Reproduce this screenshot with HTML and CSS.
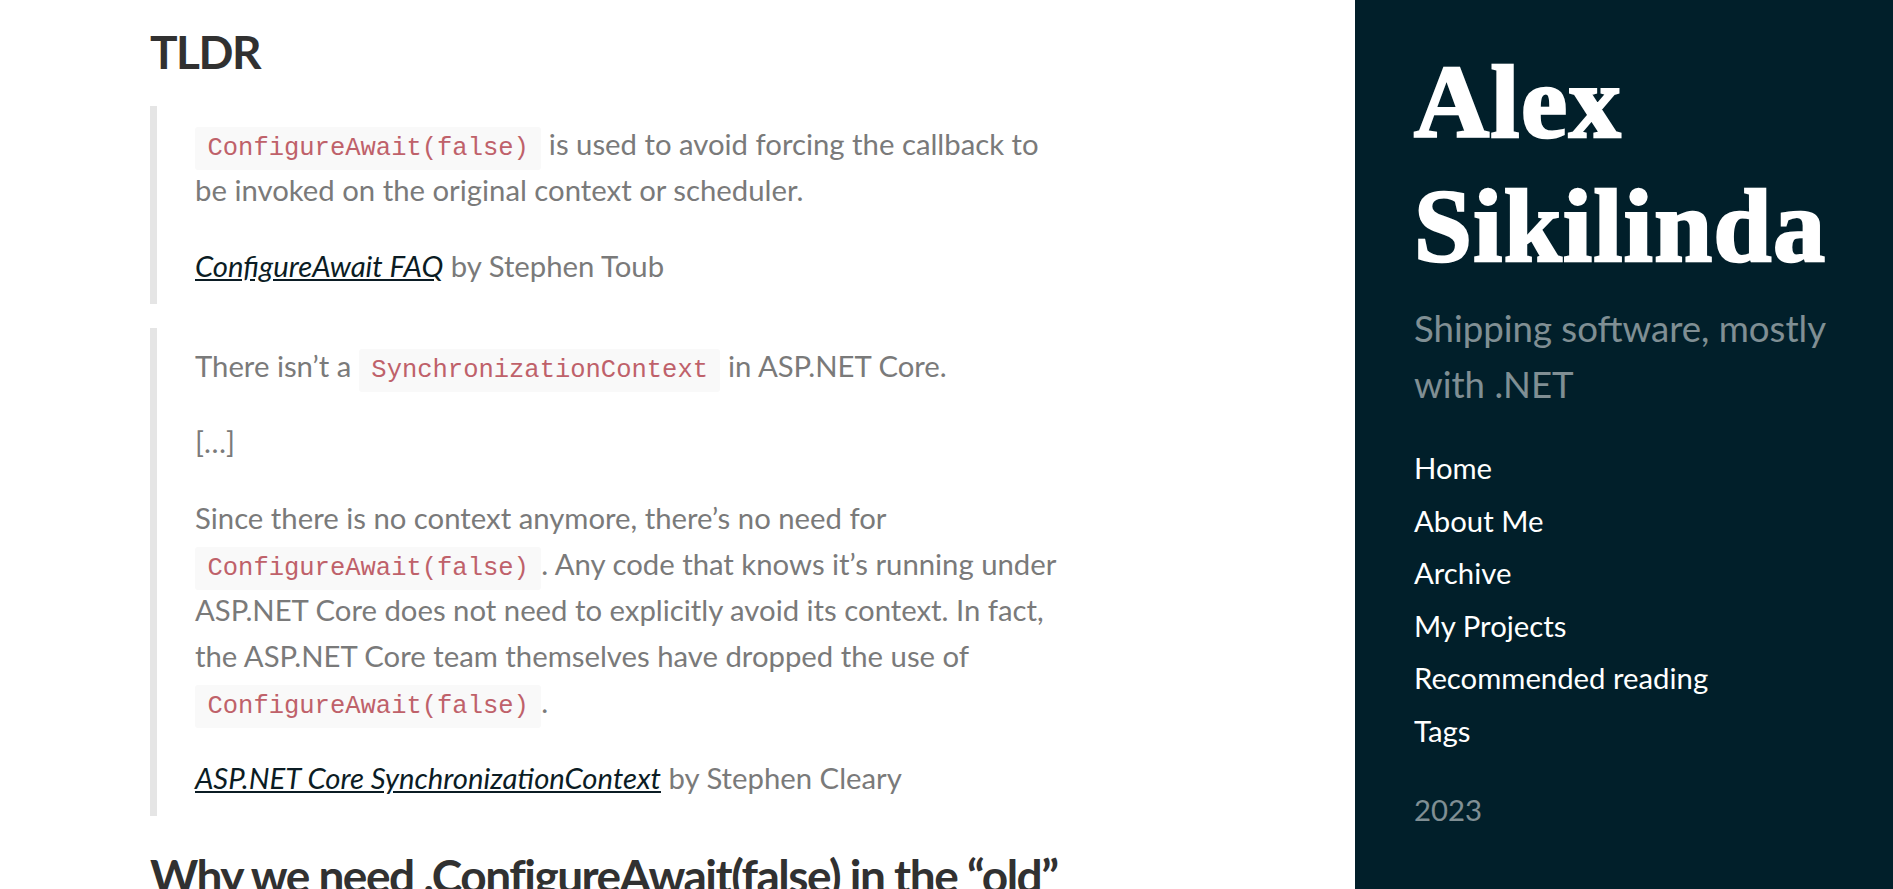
FILE: index.html
```html
<!DOCTYPE html>
<html lang="en">
<head>
<meta charset="utf-8">
<title>ConfigureAwait(false) – Alex Sikilinda</title>
<link rel="stylesheet" href="styles.css">
</head>
<body>
<div class="layout">
  <main class="content">
    <article class="post">
      <h2 class="post-heading">TLDR</h2>
      <blockquote class="quote">
        <p><code class="code">ConfigureAwait(false)</code> is used to avoid forcing the callback to be invoked on the original context or scheduler.</p>
        <p><a class="quote-link" href="#"><em>ConfigureAwait FAQ</em></a> by Stephen Toub</p>
      </blockquote>
      <blockquote class="quote">
        <p>There isn’t a <code class="code">SynchronizationContext</code> in ASP.NET Core.</p>
        <p>[…]</p>
        <p>Since there is no context anymore, there’s no need for <code class="code">ConfigureAwait(false)</code>. Any code that knows it’s running under ASP.NET Core does not need to explicitly avoid its context. In fact, the ASP.NET Core team themselves have dropped the use of <code class="code">ConfigureAwait(false)</code>.</p>
        <p><a class="quote-link" href="#"><em>ASP.NET Core SynchronizationContext</em></a> by Stephen Cleary</p>
      </blockquote>
      <h2 class="post-heading post-heading-next">Why we need .ConfigureAwait(false) in the “old” ASP.NET</h2>
    </article>
  </main>
  <aside class="sidebar">
    <div class="sidebar-about">
      <h1 class="site-title"><a href="#">Alex Sikilinda</a></h1>
      <p class="lead">Shipping software, mostly with .NET</p>
    </div>
    <nav class="sidebar-nav">
      <a class="sidebar-nav-item" href="#">Home</a>
      <a class="sidebar-nav-item" href="#">About Me</a>
      <a class="sidebar-nav-item" href="#">Archive</a>
      <a class="sidebar-nav-item" href="#">My Projects</a>
      <a class="sidebar-nav-item" href="#">Recommended reading</a>
      <a class="sidebar-nav-item" href="#">Tags</a>
    </nav>
    <p class="sidebar-year">2023</p>
  </aside>
</div>
</body>
</html>
```

FILE: styles.css
```css
html, body {
  margin: 0;
  padding: 0;
  height: 100%;
  overflow: hidden;
}

body {
  font-family: Lato, "Noto Sans", sans-serif;
  font-size: 29.3px;
  line-height: 46px;
  color: #515151;
  background: #fff;
}

.layout {
  display: flex;
  min-height: 100vh;
}

.content {
  flex: 1;
  padding: 22px 0 0 150px;
}

.post {
  width: 915px;
}

.post-heading {
  font-size: 46px;
  line-height: 60px;
  font-weight: 700;
  letter-spacing: -1.5px;
  color: #313131;
  margin: 0 0 15px;
}

.post-heading-next {
  margin-top: 30px;
}

.quote {
  margin: 24px 0;
  padding: 15px 0 15px 38px;
  border-left: 7px solid #e5e5e5;
  color: #7a7a7a;
}

.quote p {
  margin: 0 0 30px;
}

.quote p:last-child {
  margin-bottom: 0;
}

.quote-link {
  color: #0b1c24;
  text-decoration: underline;
}

.code {
  font-family: "Liberation Mono", "Courier New", monospace;
  font-size: 25.5px;
  line-height: 1;
  padding: 7px 12.5px;
  color: #bf616a;
  background: #f9f9f9;
  border-radius: 3px;
}

.sidebar {
  width: 538px;
  flex: none;
  box-sizing: border-box;
  padding: 40px 20px 0 59px;
  background: #011f2a;
  color: rgba(255, 255, 255, 0.5);
}

.site-title {
  margin: 0 0 12px;
  font-family: "Liberation Serif", "DejaVu Serif", serif;
  font-weight: 700;
  font-size: 104px;
  line-height: 124px;
  letter-spacing: 1.5px;
  -webkit-text-stroke: 2.6px #fff;
}

.site-title a {
  color: #fff;
  text-decoration: none;
}

.lead {
  margin: 0 0 30px;
  font-size: 36.6px;
  line-height: 56px;
  width: 440px;
}

.sidebar-nav {
  display: flex;
  flex-direction: column;
  margin-bottom: 30px;
}

.sidebar-nav-item {
  color: #fff;
  text-decoration: none;
  line-height: 52.5px;
}

.sidebar-year {
  margin: 0;
}
```
